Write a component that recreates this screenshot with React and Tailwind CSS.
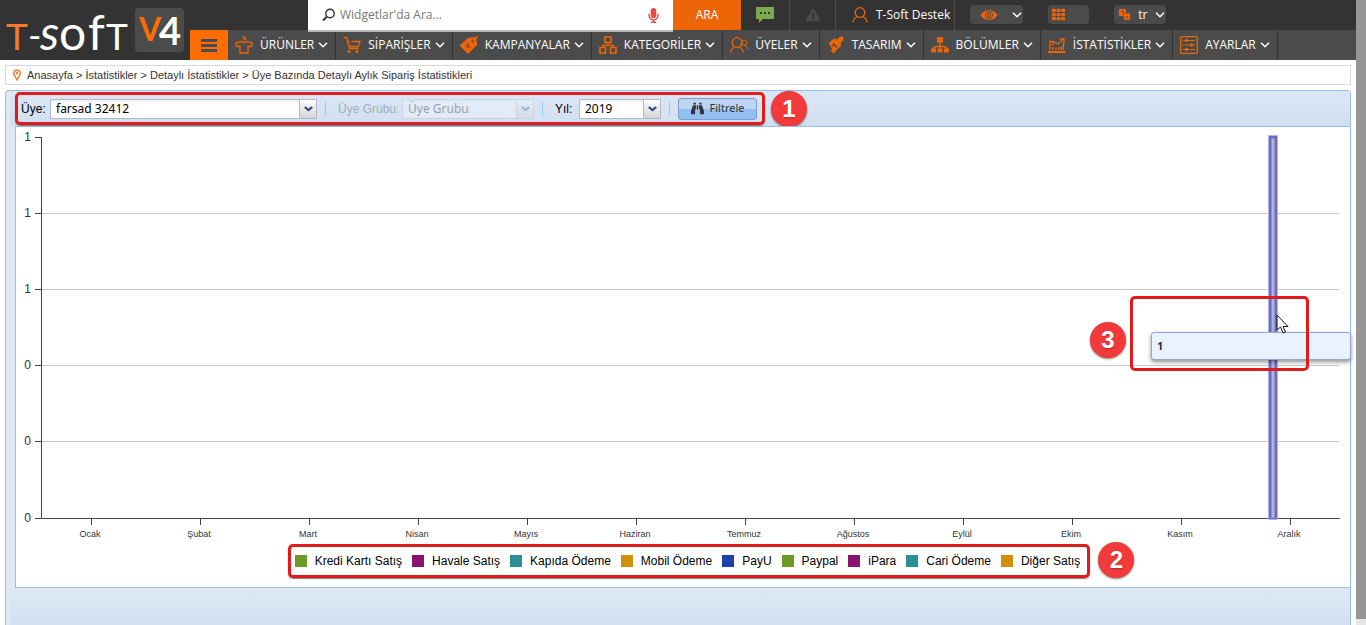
import React, { useState } from 'react';
import { FaBinoculars, FaTh, FaExclamationTriangle, FaMicrophone } from 'react-icons/fa';

const ORANGE = '#ec6608';

const Icon = ({ children }) => (
  <svg width="18" height="18" viewBox="0 0 18 18" fill="none" stroke={ORANGE} strokeWidth="1.3" className="shrink-0">
    {children}
  </svg>
);

const Chevron = () => (
  <svg width="10" height="6" viewBox="0 0 10 6" fill="none" stroke="#fff" strokeWidth="1.5" className="pointer-events-none shrink-0">
    <path d="M1 .8 5 4.8 9 .8" />
  </svg>
);

const MENU = [
  {
    label: 'ÜRÜNLER',
    icon: (
      <Icon>
        <path d="M7.6 2.2a1.4 1.4 0 1 1 1.6 1.5v1.6" />
        <path d="M6.5 5.4.8 7l.7 3.5 3.5-.5v7h8v-7l3.5.5.7-3.5-5.7-1.6C10.5 7 7.5 7 6.5 5.4z" />
      </Icon>
    ),
  },
  {
    label: 'SİPARİŞLER',
    icon: (
      <Icon>
        <path d="M.5 1.5h3L6.5 12.5h9M4.6 5.5h2M8.5 5.5H17l-1.8 5H6" />
        <circle cx="6" cy="15.5" r="1.5" fill={ORANGE} stroke="none" />
        <circle cx="14" cy="15.5" r="1.5" fill={ORANGE} stroke="none" />
      </Icon>
    ),
  },
  {
    label: 'KAMPANYALAR',
    icon: (
      <Icon>
        <path d="M.5 9.5 8.5 2.5l7-.5 1 6.5L8 17z" fill={ORANGE} strokeLinejoin="round" />
        <circle cx="13" cy="5" r="1.4" fill="#4b4b4b" stroke="none" />
        <path d="M13 5 17.5.5" strokeWidth="1.6" />
        <path d="m6 8.500 4 3M6.500 12l2.500-4.500" stroke="#8a4a20" />
      </Icon>
    ),
  },
  {
    label: 'KATEGORİLER',
    icon: (
      <Icon>
        <path d="M6 1h6v5.500H6zM1 11.500h5.500V17H1zM11.500 11.500H17V17h-5.500z" strokeWidth="1.7" />
        <path d="M9 6.500v3M3.700 11.500V9.300h10.600v2.200" />
      </Icon>
    ),
  },
  {
    label: 'ÜYELER',
    icon: (
      <Icon>
        <circle cx="7" cy="6.5" r="4.8" />
        <path d="M.7 16.5c0-3 1.800-4.500 4-5.500M9.300 11c2.200 1 3.700 2.500 3.900 5.500" />
        <circle cx="14.5" cy="6.5" r="2.4" strokeWidth="1" />
        <path d="M14.5 9.5c2 0 2.900 1 2.900 3.500" strokeWidth="1" />
      </Icon>
    ),
  },
  {
    label: 'TASARIM',
    icon: (
      <Icon>
        <path d="m1.500 7 5.500-4.500 3 1L13 .8l3.500-.3-.3 3.500L13.500 7.500l.5 2.500-5.500 5-1.500 2.500-3-2 1-3z" fill={ORANGE} stroke="none" />
        <path d="m6 7.500 4 4M7 9l-1.500 1" stroke="#4b4b4b" />
      </Icon>
    ),
  },
  {
    label: 'BÖLÜMLER',
    icon: (
      <Icon>
        <path d="M6 1h6v5.500H6zM0 12.500h5v4H0zM6.500 12.500h5v4h-5zM13 12.500h5v4h-5z" fill={ORANGE} stroke="none" />
        <path d="M9 6v7M2.500 13c0-2 1-2.500 3-2.500h7c2 0 3 .5 3 2.500" />
      </Icon>
    ),
  },
  {
    label: 'İSTATİSTİKLER',
    icon: (
      <Icon>
        <path d="M2 14V5.500h4M15.500 6v8" />
        <path d="M0 16h17.500" strokeWidth="2" />
        <path d="m4 9 3-3 3 2L15 3.500M11.500 3h4.500v4" />
        <path d="M5 14v-3M8 14v-2.500M11 14v-3M13.500 14v-4" strokeWidth="1.5" />
      </Icon>
    ),
  },
  {
    label: 'AYARLAR',
    icon: (
      <Icon>
        <rect x=".7" y=".7" width="16.6" height="16.6" rx="1" />
        <path d="M3 4.500h12M3 9h12M3 13.500h12" strokeWidth="1" />
        <path d="M6.500 3v3M11.500 7.500v3M6.500 12v3" strokeWidth="2.2" />
      </Icon>
    ),
  },
];

const MONTHS = ['Ocak', 'Şubat', 'Mart', 'Nisan', 'Mayıs', 'Haziran', 'Temmuz', 'Ağustos', 'Eylül', 'Ekim', 'Kasım', 'Aralık'];

const Y_LABELS = ['1', '1', '1', '0', '0', '0'];

const LEGEND = [
  { label: 'Kredi Kartı Satış', color: 'bg-[#6c9a24]' },
  { label: 'Havale Satış', color: 'bg-[#85156e]' },
  { label: 'Kapıda Ödeme', color: 'bg-[#2b8f94]' },
  { label: 'Mobil Ödeme', color: 'bg-[#d28f0a]' },
  { label: 'PayU', color: 'bg-[#1f40ac]' },
  { label: 'Paypal', color: 'bg-[#6c9a24]' },
  { label: 'iPara', color: 'bg-[#85156e]' },
  { label: 'Cari Ödeme', color: 'bg-[#2b8f94]' },
  { label: 'Diğer Satış', color: 'bg-[#d28f0a]' },
];

const Logo = () => (
  <a href="#" aria-label="T-Soft V4" className="flex w-[190px] shrink-0 items-center">
    <svg width="190" height="60" viewBox="0 0 190 60" fontFamily="Lato, sans-serif">
      <g fill="#fff">
        <text x="6" y="50" fontSize="37" fill="#f47a30">T</text>
        <text x="28" y="49" fontSize="36">-</text>
        <text x="40" y="50" fontSize="48" fontStyle="italic">s</text>
        <text x="59" y="50" fontSize="48">o</text>
        <text x="88" y="50" fontSize="48">f</text>
        <text x="106" y="50" fontSize="37">T</text>
      </g>
      <rect x="135" y="8" width="49" height="44" rx="4" fill="#4b4b4b" />
      <text x="139" y="41" fontSize="32" fill="#ff6c00" fontWeight="700">V</text>
      <text x="159" y="45" fontSize="38" fill="#fff" fontWeight="700">4</text>
    </svg>
  </a>
);

const Header = () => (
  <header className="flex h-[60px] bg-[#333] font-['Open_Sans',sans-serif] text-xs text-white">
    <Logo />
    <div className="flex min-w-0 flex-1 flex-col">
      <div className="ml-[118px] flex h-[30px] items-start">
        <label className="relative z-10 flex h-8 w-[365px] items-center gap-1 border-b-2 border-[#b9b9b9] bg-white pr-3 pl-[14px]">
          <svg width="14" height="14" viewBox="0 0 14 14" fill="none" stroke="#333" strokeWidth="1.4">
            <circle cx="8" cy="5.5" r="4.2" />
            <path d="M5 8.500 1 12.500" strokeWidth="2" />
          </svg>
          <input
            type="text"
            aria-label="Widget ara"
            placeholder="Widgetlar'da Ara..."
            className="min-w-0 flex-1 text-xs text-black outline-none placeholder:text-[#777]"
          />
          <FaMicrophone size={15} color="#ef4747" />
        </label>
        <button className="h-full w-[68px] bg-[#ec6608]">ARA</button>
        <button aria-label="Mesajlar" className="flex h-full w-[49px] items-center justify-center border-r border-[#4b4b4b]">
          <svg width="18" height="16" viewBox="0 0 18 16">
            <path d="M0 0h18v12H7l-4 4v-4H0z" fill="#7cab4e" />
            <path d="M4 5h2v2H4zM8 5h2v2H8zM12 5h2v2h-2z" fill="#333" />
          </svg>
        </button>
        <button aria-label="Uyarılar" className="flex h-full w-[46px] items-center justify-center border-r border-[#4b4b4b]">
          <FaExclamationTriangle size={14} color="#4b4b4b" />
        </button>
        <a href="#" className="flex h-full items-center gap-2 border-r border-[#4b4b4b] pr-1 pl-4 whitespace-nowrap">
          <svg width="16" height="16" viewBox="0 0 16 16" fill="none" stroke={ORANGE} strokeWidth="1.3">
            <circle cx="8" cy="5.5" r="4.8" />
            <path d="M1 15.500c0-3.500 2-5 4.500-6M15 15.500c0-3.500-2-5-4.500-6" />
          </svg>
          T-Soft Destek
        </a>
        <div className="mt-[5px] ml-[15px] flex gap-[25px]">
          <button aria-label="Görünüm" className="flex h-[19px] w-[53px] items-center justify-between rounded-sm bg-[#4b4b4b] pr-px pl-[10px]">
            <svg width="18" height="12" viewBox="0 0 18 12" fill="none">
              <path d="M.5 6C4-.5 14-.5 17.500 6 14 12.500 4 12.500.5 6z" fill={ORANGE} />
              <circle cx="9" cy="6" r="3.6" stroke="#4b4b4b" strokeWidth="1" />
              <circle cx="9" cy="6" r="1.5" stroke="#4b4b4b" strokeWidth="1" />
            </svg>
            <Chevron />
          </button>
          <button aria-label="Modüller" className="flex h-[19px] w-[41px] items-center rounded-sm bg-[#4b4b4b] pl-1">
            <FaTh size={13} color={ORANGE} />
          </button>
          <label className="flex h-[19px] w-[52px] items-center rounded-sm bg-[#4b4b4b] pr-px pl-[5px]">
            <svg width="12" height="12" viewBox="0 0 12 12" className="shrink-0">
              <path d="M0 0h7v7H0z" fill={ORANGE} />
              <path d="M4.500 4h7v7h-7z" fill={ORANGE} stroke="#4b4b4b" strokeWidth=".6" />
              <path d="M2 2h3M3.500 2v2M7 9l1-2 1 2" fill="none" stroke="#4b4b4b" strokeWidth=".8" />
            </svg>
            <select aria-label="Dil" className="ml-[7px] min-w-0 flex-1 appearance-none text-xs outline-none">
              <option>tr</option>
            </select>
            <Chevron />
          </label>
        </div>
      </div>
      <nav className="flex h-[30px] bg-[#4b4b4b]">
        <button aria-label="Menü" className="flex w-[38px] shrink-0 flex-col items-center justify-center gap-[2px] bg-[#ff6c00]">
          <span className="h-[3px] w-4 bg-[#4b4b4b]" />
          <span className="h-[3px] w-4 bg-[#4b4b4b]" />
          <span className="h-[3px] w-4 bg-[#4b4b4b]" />
        </button>
        {MENU.map((item) => (
          <a key={item.label} href="#" className="flex items-center border-r border-[#333] px-[7px] whitespace-nowrap">
            {item.icon}
            <span className="mr-1 ml-[7px]">{item.label}</span>
            <Chevron />
          </a>
        ))}
      </nav>
    </div>
  </header>
);

const Combo = ({ id, value, onChange, options, width, disabled }) => (
  <div className={`relative flex h-5 ${width} ${disabled ? 'opacity-30' : ''}`}>
    <select
      id={id}
      value={value}
      onChange={onChange}
      disabled={disabled}
      className="w-full appearance-none border border-[#b5b8c8] bg-linear-to-b from-[#f0f0f0] to-white to-20% pl-[5px] font-['Noto_Sans',sans-serif] text-xs text-black outline-none"
    >
      {options.map((o) => (
        <option key={o}>{o}</option>
      ))}
    </select>
    <span className="pointer-events-none absolute top-0 right-0 flex h-full w-[18px] items-center justify-center border border-[#b5b8c8] bg-linear-to-b from-white to-[#d4d4d4]">
      <svg width="9" height="6" viewBox="0 0 9 6" fill="none" stroke="#2b4a86" strokeWidth="2.2">
        <path d="m.8 1 3.700 3L8.200 1" />
      </svg>
    </span>
  </div>
);

const Separator = () => <span className="block h-[14px] w-px bg-[#98c8ff]" />;

const Badge = ({ children }) => (
  <span className="flex size-9 shrink-0 items-center justify-center rounded-full bg-[#f23a3a] text-2xl font-bold text-white shadow-[0_1px_2px_rgba(0,0,0,0.5)] text-shadow-sm">
    {children}
  </span>
);

const Chart = () => (
  <svg viewBox="0 0 1334 417" className="block h-auto w-full" fill="#333">
    {Y_LABELS.map((label, i) => {
      const y = Math.floor(10 + i * 76.2);
      return (
        <g key={i}>
          {i > 0 && i < 5 && <path d={`M26 ${y + 0.5}H1323`} stroke="#c8c8c8" />}
          <path d={`M19 ${y + 0.5}h6`} stroke="#444" />
          <text x="15" y={y + 4} fontSize="12" textAnchor="end">{label}</text>
        </g>
      );
    })}
    <path d="M25.500 10V391.500H1324" fill="none" stroke="#444" />
    {MONTHS.map((month, i) => {
      const x = Math.round(75 + i * 109);
      return (
        <g key={month}>
          <path d={`M${x + 0.5} 392v6`} stroke="#444" />
          <text x={x - 1} y="410" fontSize="9" textAnchor="middle">{month}</text>
        </g>
      );
    })}
    <rect x="1252" y="8" width="10" height="385" fill="#b5b5e3" />
    <rect x="1253" y="9" width="8" height="383" fill="#6a6acb" />
    <rect x="1255" y="11" width="4" height="380" fill="#8d93c8" />
    <rect x="1256" y="12" width="2" height="378" fill="#a9bad0" />
  </svg>
);

const App = () => {
  const [member, setMember] = useState('farsad 32412');
  const [year, setYear] = useState('2019');

  return (
    <div className="flex min-h-screen bg-white font-['Liberation_Sans',Arial,sans-serif] text-xs text-[#333]">
      <div className="flex min-w-0 flex-1 flex-col">
        <Header />

        <nav className="mx-[5px] mt-[5px] flex h-5 items-center gap-[6px] border border-[#d9d9d9] pl-[7px] text-[11px]">
          <svg width="8" height="12" viewBox="0 0 8 12" fill="none">
            <path d="M4 11 1.300 6a3.200 3.200 0 1 1 5.400 0z" stroke="#f47a30" strokeWidth="1.5" />
            <circle cx="4" cy="4" r="1.2" fill="#f47a30" />
          </svg>
          <p>
            <a href="#">Anasayfa</a> &gt; <a href="#">İstatistikler</a> &gt; <a href="#">Detaylı İstatistikler</a> &gt;{' '}
            <a href="#">Üye Bazında Detaylı Aylık Sipariş İstatistikleri</a>
          </p>
        </nav>

        <main className="mx-[5px] mt-[5px] flex flex-1 flex-col rounded-t-sm border border-b-0 border-[#99bce8] bg-[#dfe9f6] pl-1">
          <div className="flex h-[35px] items-center gap-[6px] bg-linear-to-b from-[#dce7f5] to-[#d0dff0] pl-[5px]">
            <form
              onSubmit={(e) => e.preventDefault()}
              className="flex h-[33px] items-center rounded-[5px] border-[3px] border-[#e01b1b] pr-[5px] pl-[3px] whitespace-nowrap shadow-[0_1px_1px_rgba(0,0,0,0.5)]"
            >
              <label htmlFor="member" className="w-[29px] text-black">Üye:</label>
              <Combo id="member" width="w-[267px]" value={member} onChange={(e) => setMember(e.target.value)} options={['farsad 32412']} />
              <div className="mr-3 ml-2"><Separator /></div>
              <label htmlFor="group" className="w-16 text-[#a3aebb]">Üye Grubu:</label>
              <Combo id="group" width="w-[132px]" value="Üye Grubu" options={['Üye Grubu']} disabled />
              <div className="mr-3 ml-2"><Separator /></div>
              <label htmlFor="year" className="w-6 text-black">Yıl:</label>
              <Combo id="year" width="w-[82px]" value={year} onChange={(e) => setYear(e.target.value)} options={['2019', '2018']} />
              <div className="mx-2"><Separator /></div>
              <button
                type="submit"
                className="flex h-[22px] w-[79px] items-center justify-center gap-[6px] rounded-[3px] border border-[#7f9dc6] bg-linear-to-b from-[#bcd5f3] from-50% to-[#92bef0] to-50% font-['Noto_Sans',sans-serif] text-[11px]"
              >
                <FaBinoculars size={13} color="#333" />
                Filtrele
              </button>
            </form>
            <Badge>1</Badge>
          </div>

          <section className="relative ml-[5px] border-y border-l border-[#99bce8] bg-white pb-[9px]">
            <Chart />
            <div className="flex justify-center">
              <div className="relative ml-3">
                <ul className="flex h-[34px] items-center gap-[10px] rounded-[5px] border-[3px] border-[#e01b1b] pr-[7px] pl-1 whitespace-nowrap text-black shadow-[0_1px_1px_rgba(0,0,0,0.5)]">
                  {LEGEND.map((item) => (
                    <li key={item.label} className="flex items-center gap-2">
                      <span className={`size-3 ${item.color}`} />
                      {item.label}
                    </li>
                  ))}
                </ul>
                <div className="absolute bottom-0 left-full ml-2">
                  <Badge>2</Badge>
                </div>
              </div>
            </div>

            {/* hover tip of the December bar */}
            <div className="absolute top-[205px] -right-px h-7 w-[200px] rounded-[3px] border border-[#8eaace] bg-[#e9f2ff] px-[5px] font-['Noto_Sans',sans-serif] text-[11px] leading-[26px] font-bold shadow-[0_2px_4px_rgba(0,0,0,0.45)]">
              1
            </div>
            <div className="absolute top-[169px] right-[41px] h-[75px] w-[179px] rounded-[5px] border-[3px] border-[#e01b1b]" />
            <div className="absolute top-[195px] right-[224px]">
              <Badge>3</Badge>
            </div>
            <svg width="13" height="20" viewBox="0 0 13 20" className="absolute top-[187px] right-[61px]">
              <path d="M1 1v15l3.500-3 2.500 6 2.500-1-2.500-5.500h5z" fill="#fff" stroke="#111" />
            </svg>
          </section>

          <div className="flex-1 bg-linear-to-b from-[#dfe9f5] to-[#d3e0f1]" />
        </main>
      </div>
      <div className="w-[10px] shrink-0 border-b-[6px] border-[#e6e6e6] bg-[#969696]" />
    </div>
  );
};

export default App;
